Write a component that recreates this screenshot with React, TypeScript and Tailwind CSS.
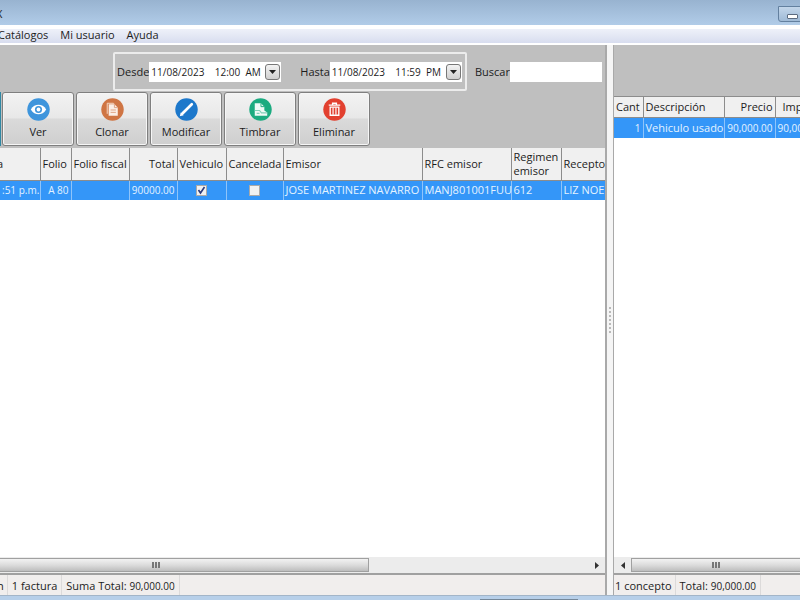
import React from 'react';

const FONT = "font-['Open_Sans','Noto_Sans',sans-serif]";

const EyeIcon = () => (
  <svg viewBox="0 0 24 24" className="w-[23px] h-[23px]">
    <circle cx="12" cy="12" r="11.7" fill="#3e95dc" />
    <path d="M4 12C6 8.4 9 7 12 7s6 1.4 8 5c-2 3.6-5 5-8 5s-6-1.400-8-5z" fill="#fff" />
    <circle cx="12" cy="12" r="3.700" fill="#3e95dc" />
    <circle cx="12" cy="12" r="2" fill="#fff" />
  </svg>
);

const CloneIcon = () => (
  <svg viewBox="0 0 24 24" className="w-[23px] h-[23px]">
    <circle cx="12" cy="12" r="11.7" fill="#cf7544" />
    <path d="M6.500 5.500h6.500l1 1M6.500 5.500v11" stroke="#f6d9c8" strokeWidth="1" fill="none" />
    <path d="M8 6.500h6l3.500 3.500v8.500H8z" fill="#fbeee6" />
    <path d="M14 6.500V10h3.500M10 12.500h5.500M10 15h5.500" stroke="#dfa283" strokeWidth="1" fill="none" />
  </svg>
);

const EditIcon = () => (
  <svg viewBox="0 0 24 24" className="w-[23px] h-[23px]">
    <circle cx="12" cy="12" r="11.7" fill="#1d78cb" />
    <path d="M7.500 16.500L17.500 6.500" stroke="#fff" strokeWidth="2.800" strokeLinecap="round" />
    <path d="M5 19l1-4 3 3z" fill="#fff" />
  </svg>
);

const StampIcon = () => (
  <svg viewBox="0 0 24 24" className="w-[23px] h-[23px]">
    <circle cx="12" cy="12" r="11.7" fill="#1bab80" />
    <path d="M6 5.500h6.500L16 9v4l3 2v3.500H6z" fill="#eefaf6" />
    <path d="M12.500 5.500V9H16" stroke="#1bab80" fill="none" />
    <path d="M6 13h5l2 2.500h6M8 16h3" stroke="#7fd0b8" strokeWidth="1.200" fill="none" />
  </svg>
);

const TrashIcon = () => (
  <svg viewBox="0 0 24 24" className="w-[23px] h-[23px]">
    <circle cx="12" cy="12" r="11.7" fill="#e2402f" />
    <path d="M6 7.500h12M10 7V5.500h4V7" stroke="#fff" strokeWidth="1.400" fill="none" />
    <path d="M7.500 9.500h9v8.500h-9z" fill="none" stroke="#fff" strokeWidth="1.400" />
    <path d="M10.500 10v7.500M13.500 10v7.500" stroke="#fff" strokeWidth="1.200" />
  </svg>
);

const actions = [
  { name: 'Ver', icon: <EyeIcon /> },
  { name: 'Clonar', icon: <CloneIcon /> },
  { name: 'Modificar', icon: <EditIcon /> },
  { name: 'Timbrar', icon: <StampIcon /> },
  { name: 'Eliminar', icon: <TrashIcon /> },
];

interface DateFieldProps {
  id: string;
  label: string;
  value: string;
}

const DateField: React.FC<DateFieldProps> = ({ id, label, value }) => (
  <div className="flex items-center">
    <label htmlFor={id}>{label}</label>
    <div className="flex items-center w-[132px] h-5 bg-white pr-px">
      <input
        id={id}
        type="text"
        defaultValue={value}
        className="flex-1 min-w-0 h-5 pl-[2px] bg-white outline-none whitespace-pre text-[10px]"
      />
      <button
        aria-label={`Abrir calendario ${label}`}
        className="w-[15px] h-4 shrink-0 flex items-center justify-center rounded-[3px] border border-[#777] bg-linear-to-b from-[#f3f3f3] to-[#cfcfcf]"
      >
        <svg viewBox="0 0 7 4" className="w-[7px] h-1"><path d="M0 0h7L3.500 4z" fill="#222" /></svg>
      </button>
    </div>
  </div>
);

const CheckCell = ({ label, checked }: { label: string; checked: boolean }) => (
  <span className="relative flex w-[11px] h-[11px] mx-auto">
    <input
      type="checkbox"
      aria-label={label}
      defaultChecked={checked}
      className="peer appearance-none w-[11px] h-[11px] border border-[#a9a9a9] bg-[#f1f1f1]"
    />
    <svg viewBox="0 0 11 11" className="absolute inset-0 hidden peer-checked:block pointer-events-none">
      <path d="M2.500 5l2 3L8.500 2" stroke="#2b3a7c" strokeWidth="1.600" fill="none" />
    </svg>
  </span>
);

const Grip = () => (
  <span className="flex gap-px">
    <span className="w-[2px] h-[6px] bg-[#777]"></span>
    <span className="w-[2px] h-[6px] bg-[#777]"></span>
    <span className="w-[2px] h-[6px] bg-[#777]"></span>
  </span>
);

const th = 'border-r border-[#8c8c8c] px-[2px] font-normal text-left';
const td = 'border-r border-[#8fc4fa] px-[2px]';
const num = `${td} text-right text-[10px]`;

const InvoiceTable = () => (
  <table className="w-full table-fixed border-collapse whitespace-nowrap">
    <colgroup>
      <col className="w-[40px]" />
      <col className="w-[31px]" />
      <col className="w-[58px]" />
      <col className="w-[48px]" />
      <col className="w-[49px]" />
      <col className="w-[57px]" />
      <col className="w-[139px]" />
      <col className="w-[89px]" />
      <col className="w-[50px]" />
      <col />
    </colgroup>
    <thead>
      <tr className="h-8 bg-[#f0f0f0] border-b border-[#8c8c8c]">
        <th className={th}><span className="block -ml-[5px]">a</span></th>
        <th className={th}>Folio</th>
        <th className={th}>Folio fiscal</th>
        <th className={`${th} text-right`}>Total</th>
        <th className={th}>Vehiculo</th>
        <th className={th}>Cancelada</th>
        <th className={th}>Emisor</th>
        <th className={th}>RFC emisor</th>
        <th className={`${th} whitespace-normal leading-[14px]`}>Regimen emisor</th>
        <th className="px-[2px] font-normal text-left">Recepto</th>
      </tr>
    </thead>
    <tbody>
      <tr className="h-5 bg-[#3496f8] text-[#e4f3ff]">
        <td className={num}>:51 p.m.</td>
        <td className={num}>A 80</td>
        <td className={td}></td>
        <td className={num}>90000.00</td>
        <td className={td}><CheckCell label="Vehiculo" checked /></td>
        <td className={td}><CheckCell label="Cancelada" checked={false} /></td>
        <td className={td}>JOSE MARTINEZ NAVARRO</td>
        <td className={td}>MANJ801001FUU</td>
        <td className={td}>612</td>
        <td className="px-[2px]">LIZ NOE</td>
      </tr>
    </tbody>
  </table>
);

const ConceptTable = () => (
  <table className="w-full table-fixed border-collapse whitespace-nowrap">
    <colgroup>
      <col className="w-[29px]" />
      <col className="w-[81px]" />
      <col className="w-[51px]" />
      <col />
    </colgroup>
    <thead>
      <tr className="h-[21px] bg-[#f0f0f0] border-y border-[#8c8c8c]">
        <th className={th}>Cant</th>
        <th className={th}>Descripción</th>
        <th className={`${th} text-right`}>Precio</th>
        <th className="pl-[7px] font-normal text-left">Importe</th>
      </tr>
    </thead>
    <tbody>
      <tr className="h-5 bg-[#3496f8] text-[#e4f3ff]">
        <td className={num}>1</td>
        <td className={td}>Vehiculo usado</td>
        <td className={num}>90,000.00</td>
        <td className="pl-[2px] text-[10px]">90,000.00</td>
      </tr>
    </tbody>
  </table>
);

const thumb = 'h-[14px] flex items-center justify-center border border-[#a0a0a0] bg-linear-to-b from-[#f2f2f2] via-[#dcdcdc] to-[#bdbdbd]';
const statusCell = 'px-1 border-r border-[#dcdada] leading-[21px]';

export default function App() {
  return (
    <div className={`h-screen flex flex-col overflow-hidden bg-[#f0f0f0] text-[11px] leading-[14px] text-[#1c1c1c] ${FONT}`}>
      {/* Title bar */}
      <header className="h-[25px] shrink-0 flex items-start justify-between bg-linear-to-b from-[#98b3d0] to-[#b1cce8]">
        <span className="-ml-1 pt-[7px]">X</span>
        <button
          aria-label="Minimizar"
          className="mt-[6px] -mr-[6px] w-7 h-4 flex items-center justify-center rounded-bl-[3px] border border-[#63809f] bg-linear-to-b from-[#c3d6ea] to-[#9fbad6]"
        >
          <span className="w-[11px] h-[5px] mt-1 rounded-[1px] border border-[#5b6b80] bg-white"></span>
        </button>
      </header>

      {/* Menu */}
      <nav className="h-5 shrink-0 flex items-start gap-3 border-t-4 border-b-2 border-white bg-linear-to-b from-[#eef1f9] to-[#d8ddef] leading-3">
        <a href="#catalogos" className="-ml-[2px]">Catálogos</a>
        <a href="#usuario">Mi usuario</a>
        <a href="#ayuda">Ayuda</a>
      </nav>

      <main className="flex-1 min-h-0 grid grid-cols-[607fr_6px_187fr]">
        {/* Invoices */}
        <section className="min-w-0 flex flex-col border-r-2 border-[#a9a9a9]">
          <div className="bg-[#bfbfbf] h-[103px] shrink-0 flex flex-col overflow-hidden">
            <div className="flex pt-[7px] pl-[113px] shrink-0">
              <div className="flex items-center gap-[19px] w-[354px] h-[39px] shrink-0 pl-[2px] border-2 border-[#ececec] rounded-[2px]">
                <DateField id="desde" label="Desde" value="11/08/2023    12:00  AM" />
                <DateField id="hasta" label="Hasta" value="11/08/2023    11:59  PM" />
              </div>
              <div className="flex-1 min-w-0 flex items-center h-[39px] pl-2 pr-[3px]">
                <label htmlFor="buscar">Buscar</label>
                <input id="buscar" type="text" className="flex-1 min-w-0 h-5 px-1 bg-white outline-none" />
              </div>
            </div>
            <div className="flex gap-[2px] pt-px">
              <span className="w-px h-[54px] -mr-px bg-[#2f88a4]"></span>
              {actions.map((a) => (
                <button
                  key={a.name}
                  className="w-[72px] h-[54px] flex flex-col items-center pt-[5px] gap-[4px] rounded-[3px] border border-[#7f7f7f] bg-[linear-gradient(#f3f3f3,#e8e8e8_48%,#dadada_50%,#cfcfcf)] shadow-[inset_0_0_0_1px_#f6f6f6]"
                >
                  {a.icon}
                  <span>{a.name}</span>
                </button>
              ))}
            </div>
          </div>
          <div className="flex-1 min-h-0 overflow-hidden bg-white">
            <InvoiceTable />
          </div>
          <div className="h-4 shrink-0 flex items-center bg-[#ececec]">
            <div className={`${thumb} w-[61%] border-l-0 pr-14`}><Grip /></div>
            <button aria-label="Desplazar a la derecha" className="ml-auto mr-[6px]">
              <svg viewBox="0 0 4 7" className="w-1 h-[7px]"><path d="M0 0l4 3.500L0 7z" fill="#333" /></svg>
            </button>
          </div>
          <footer className="h-[22px] shrink-0 flex border-t-2 border-[#a0a0a0] bg-[#f1eeed]">
            <span className="-ml-[3px] pr-[3px] border-r border-[#dcdada] leading-[21px]">n</span>
            <span className={statusCell}>1 factura</span>
            <span className={statusCell}>Suma Total: <span className="text-[10px]">90,000.00</span></span>
          </footer>
        </section>

        {/* Splitter */}
        <div className="flex flex-col items-center justify-center gap-[2px] bg-[#f5f5f5]">
          {Array.from({ length: 7 }, (_, i) => (
            <span key={i} className="w-[2px] h-[2px] bg-[#b9b9b9]"></span>
          ))}
        </div>

        {/* Concepts */}
        <section className="min-w-0 flex flex-col border-l border-[#a9a9a9]">
          <div className="h-[51px] shrink-0 bg-[#bfbfbf]"></div>
          <div className="flex-1 min-h-0 overflow-hidden bg-white">
            <ConceptTable />
          </div>
          <div className="h-4 shrink-0 flex items-center bg-[#ececec]">
            <button aria-label="Desplazar a la izquierda" className="w-[17px] shrink-0 flex justify-center">
              <svg viewBox="0 0 4 7" className="w-1 h-[7px]"><path d="M4 0L0 3.500 4 7z" fill="#333" /></svg>
            </button>
            <div className={`${thumb} flex-1 border-r-0`}><Grip /></div>
          </div>
          <footer className="h-[22px] shrink-0 flex border-t-2 border-[#a0a0a0] bg-[#f1eeed]">
            <span className="pl-px pr-[3px] border-r border-[#dcdada] leading-[21px]">1 concepto</span>
            <span className={statusCell}>Total: <span className="text-[10px]">90,000.00</span></span>
          </footer>
        </section>
      </main>

      {/* Window edge */}
      <div className="h-[5px] shrink-0 flex items-end bg-[#b7cfe9] border-t border-[#a3b5c8]">
        <span className="ml-[60%] w-[98px] h-px bg-[#76889a]"></span>
      </div>
    </div>
  );
}
